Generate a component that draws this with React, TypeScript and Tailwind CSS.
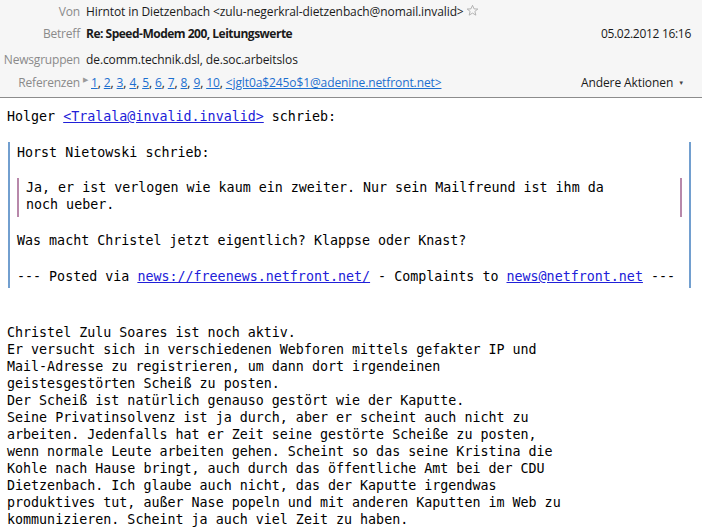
const refs = ["1", "2", "3", "4", "5", "6", "7", "8", "9", "10"];

const bodyLines = [
  "Christel Zulu Soares ist noch aktiv.",
  "Er versucht sich in verschiedenen Webforen mittels gefakter IP und",
  "Mail-Adresse zu registrieren, um dann dort irgendeinen",
  "geistesgestörten Scheiß zu posten.",
  "Der Scheiß ist natürlich genauso gestört wie der Kaputte.",
  "Seine Privatinsolvenz ist ja durch, aber er scheint auch nicht zu",
  "arbeiten. Jedenfalls hat er Zeit seine gestörte Scheiße zu posten,",
  "wenn normale Leute arbeiten gehen. Scheint so das seine Kristina die",
  "Kohle nach Hause bringt, auch durch das öffentliche Amt bei der CDU",
  "Dietzenbach. Ich glaube auch nicht, das der Kaputte irgendwas",
  "produktives tut, außer Nase popeln und mit anderen Kaputten im Web zu",
  "kommunizieren. Scheint ja auch viel Zeit zu haben.",
];

function Star() {
  return (
    <svg width="13" height="13" viewBox="0 0 24 24" fill="none" stroke="#a8a8a8" strokeWidth="1.6" strokeLinejoin="round">
      <polygon points="12,2.5 14.9,9 21.8,9.3 16.4,13.7 18.2,20.6 12,16.8 5.8,20.6 7.6,13.7 2.2,9.3 9.1,9" />
    </svg>
  );
}

function Label({ children }: { children: React.ReactNode }) {
  return <div className="w-[86px] shrink-0 text-right text-[#8a8a8a] pr-[6px] tracking-[-0.2px]">{children}</div>;
}

export default function App() {
  return (
    <div className="w-[702px] h-[530px] bg-white overflow-hidden">
      {/* Header */}
      <div className="bg-[#f6f6f6] border-b border-[#8c8c8c] text-[12px] text-[#1a1a1a] font-['Open_Sans','Noto_Sans',sans-serif] h-[98px] pr-[11px]">
        <div className="flex items-center h-[24px]">
          <Label>Von</Label>
          <span className="tracking-[-0.1px]">Hirntot in Dietzenbach &lt;zulu-negerkral-dietzenbach@nomail.invalid&gt;</span>
          <span className="ml-[2px] mb-[3px]">
            <Star />
          </span>
        </div>
        <div className="flex items-center h-[20px]">
          <Label>Betreff</Label>
          <span className="font-bold tracking-[-0.5px]">Re: Speed-Modem 200, Leitungswerte</span>
          <span className="ml-auto tracking-[-0.3px]">05.02.2012 16:16</span>
        </div>
        <div className="flex items-center h-[32px]">
          <Label>Newsgruppen</Label>
          <span className="tracking-[-0.1px]">de.comm.technik.dsl, de.soc.arbeitslos</span>
        </div>
        <div className="flex items-center h-[14px]">
          <Label>Referenzen</Label>
          <span className="text-[7px] text-[#9a9a9a] -ml-[3px] mr-[3px] mb-[6px]">▶</span>
          <span className="text-[#1d6fcf] tracking-[-0.1px]">
            {refs.map((r) => (
              <span key={r}>
                <span className="underline">{r}</span>
                <span className="text-[#1a1a1a]">, </span>
              </span>
            ))}
            <span className="underline">&lt;jglt0a$245o$1@adenine.netfront.net&gt;</span>
          </span>
          <span className="ml-auto mr-[7px] flex items-center gap-[5px] tracking-[-0.1px]">
            Andere Aktionen
            <span className="text-[6px] text-[#444]">▼</span>
          </span>
        </div>
      </div>

      {/* Message body */}
      <div className="font-['DejaVu_Sans_Mono',monospace] text-[13.33px] leading-[17px] text-black pt-[10px] pl-[7px]">
        <div>
          Holger <span className="text-[#2020d8] underline">&lt;Tralala@invalid.invalid&gt;</span> schrieb:
        </div>
        <div className="h-[17px]" />
        <div className="ml-[1px] w-[683px] border-l-2 border-r-2 border-[#729fcf] pl-[7px] pt-[2px] pb-[3px]">
          <div>Horst Nietowski schrieb:</div>
          <div className="h-[17px]" />
          <div className="w-[665px] border-l-2 border-r-2 border-[#b888aa] pl-[7px] pt-[1px] pb-[4px]">
            <div>Ja, er ist verlogen wie kaum ein zweiter. Nur sein Mailfreund ist ihm da</div>
            <div>noch ueber.</div>
          </div>
          <div className="h-[15px]" />
          <div>Was macht Christel jetzt eigentlich? Klappse oder Knast?</div>
          <div className="h-[19px]" />
          <div className="whitespace-pre">
            --- Posted via <span className="text-[#2020d8] underline">news://freenews.netfront.net/</span> - Complaints to{" "}
            <span className="text-[#2020d8] underline">news@netfront.net</span> ---
          </div>
        </div>
        <div className="h-[36px]" />
        {bodyLines.map((l) => (
          <div key={l}>{l}</div>
        ))}
      </div>
    </div>
  );
}
